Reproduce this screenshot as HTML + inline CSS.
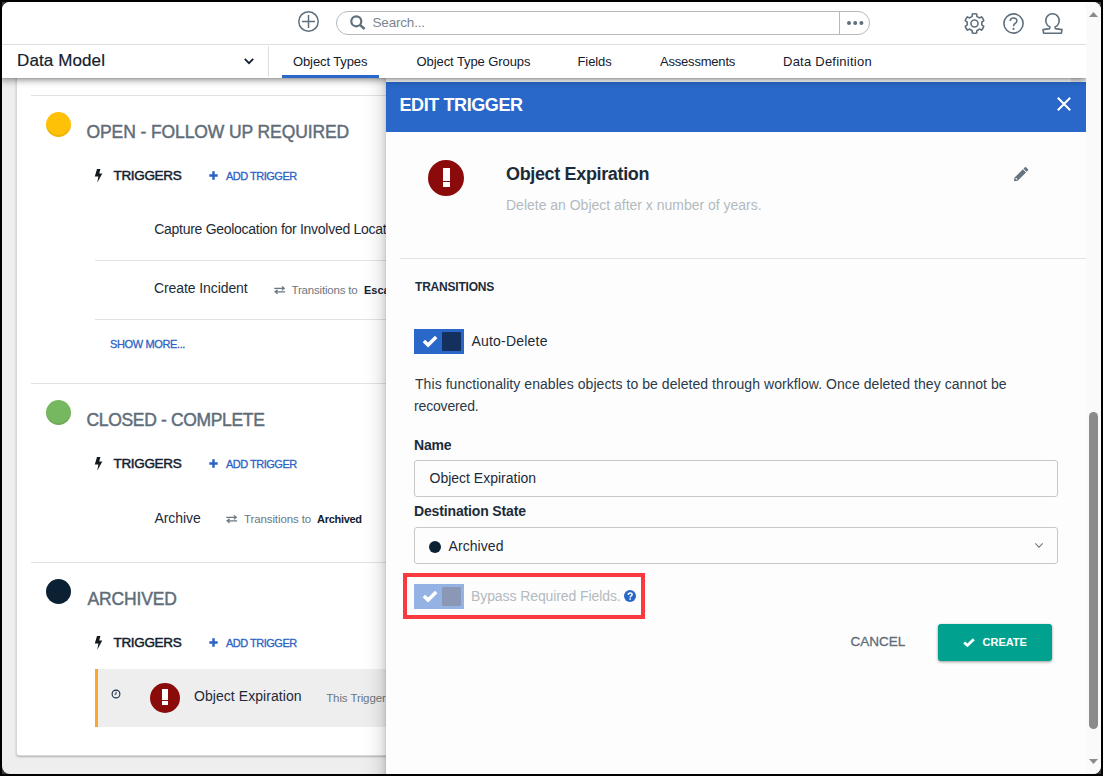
<!DOCTYPE html>
<html>
<head>
<meta charset="utf-8">
<title>Edit Trigger</title>
<style>
*{box-sizing:border-box;margin:0;padding:0}
html,body{width:1103px;height:776px;overflow:hidden;background:#000;font-family:"Liberation Sans",sans-serif;}
#win{position:absolute;left:2px;top:2px;width:1099px;height:772px;background:#eeeeee;border-radius:8px;overflow:hidden;}
#pg{position:absolute;left:-2px;top:-2px;width:1103px;height:776px;}
.abs{position:absolute;white-space:nowrap;}
svg{position:absolute;overflow:visible}
#topbar{left:0;top:0;width:1086px;height:45px;background:#fff;border-bottom:1px solid #dcdfe2;}
#navbar{left:0;top:45px;width:1086px;height:33px;background:#fff;box-shadow:0 0 1px rgba(0,0,0,.35),0 2px 7px rgba(0,0,0,.45);}
#vscroll{left:1086px;top:0;width:15px;height:776px;background:#fafafa;}
#card{left:16px;top:60px;width:1056px;height:696px;background:#fff;border:1px solid #d6d8db;border-radius:3px;box-shadow:0 1px 2px rgba(0,0,0,.25);}
.hr{height:1px;background:#e1e2e3;}
.state{font-size:17.5px;color:#5f6d79;-webkit-text-stroke:.45px #5f6d79;}
.trg{font-size:13.5px;color:#14202e;-webkit-text-stroke:.5px #14202e;}
.add{font-size:11px;color:#2c63c4;-webkit-text-stroke:.3px #2c63c4;}
.item{font-size:14px;color:#1d2a38;}
.trans{font-size:11.5px;color:#6b7781;}
.tb{font-size:11px;color:#14202e;font-weight:bold;}
.dot{border-radius:50%;}
#panel{left:386px;top:82px;width:700px;height:694px;background:#fdfdfd;}
#pshadow{left:362px;top:78px;width:24px;height:698px;background:linear-gradient(to right,rgba(0,0,0,0) 0,rgba(0,0,0,.012) 30%,rgba(0,0,0,.04) 58%,rgba(0,0,0,.085) 80%,rgba(0,0,0,.15) 94%,rgba(0,0,0,.21) 100%);}
#phead{left:386px;top:82px;width:700px;height:50px;background:#2967c8;}
.tab{font-size:13px;color:#14202e;}
.lbl{font-size:14px;font-weight:bold;color:#1c2b3a;}
.inp{left:414px;width:644px;height:36.5px;border:1px solid #c5c9cc;border-radius:3px;background:#fdfdfd;}
</style>
</head>
<body>
<div style="position:absolute;left:2px;top:2px;width:8px;height:8px;background:#3a3a3a"></div>
<div style="position:absolute;left:1093px;top:2px;width:8px;height:8px;background:#3a3a3a"></div>
<div style="position:absolute;left:2px;top:766px;width:8px;height:8px;background:#3a3a3a"></div>
<div style="position:absolute;left:1093px;top:766px;width:8px;height:8px;background:#3a3a3a"></div>
<div id="win"><div id="pg">

<!-- background card (left list) -->
<div class="abs" id="card"></div>
<!-- inner scrollbar stub under header -->
<div class="abs" style="left:1071px;top:76px;width:15px;height:8px;background:#e9e9e9"></div>

<!-- LEFT CONTENT -->
<div class="abs hr" style="left:31px;top:95px;width:1040px"></div>
<div class="abs dot" style="left:46px;top:112px;width:25.2px;height:25.2px;background:#ffc107;box-shadow:inset 0 -2px 0 rgba(0,0,0,.07)"></div>
<div class="abs state" id="s1" style="left:86.5px;top:122.2px;letter-spacing:-0.1px">OPEN - FOLLOW UP REQUIRED</div>

<svg style="left:94px;top:168.5px" width="9" height="14" viewBox="0 0 9 14"><path d="M3.0 0 L6.4 0 L5.2 4.6 L8.3 4.6 L3.2 13.8 L4.4 7.4 L0.8 7.4 Z" fill="#14181f"/></svg>
<div class="abs trg" id="t1" style="left:113.5px;top:168.0px;letter-spacing:-0.33px">TRIGGERS</div>
<svg style="left:208.5px;top:171px" width="9" height="9" viewBox="0 0 9 9"><path d="M4.5 0.3V8.7M0.3 4.5H8.7" stroke="#2c63c4" stroke-width="2.5" fill="none"/></svg>
<div class="abs add" id="a1" style="left:226.0px;top:170.0px;letter-spacing:-0.5px">ADD TRIGGER</div>
<div class="abs item" id="i1" style="left:154.2px;top:221.1px;letter-spacing:-0.28px"><span id="i1a">Capture Geolocation for Involved Loc</span>ation</div>
<div class="abs hr" style="left:95px;top:260px;width:976px"></div>
<div class="abs item" id="i2" style="left:154.0px;top:280.4px;letter-spacing:-0.09px">Create Incident</div>
<svg style="left:273.6px;top:285.7px" width="11.4" height="8.2" viewBox="0 0 12 9" preserveAspectRatio="none"><path d="M0.3 2.6H10.6M8.2 0.4L10.9 2.6L8.2 4.8M11.7 6.4H1.4M3.8 4.2L1.1 6.4L3.8 8.6" stroke="#6b7781" stroke-width="1.3" fill="none"/></svg>
<div class="abs trans" id="tr1" style="left:291.5px;top:284.0px;letter-spacing:-0.19px">Transitions to</div>
<div class="abs tb" id="tb1" style="left:364px;top:284px">Escalated</div>
<div class="abs hr" style="left:95px;top:319px;width:976px"></div>
<div class="abs add" id="sm" style="left:110.0px;top:338.3px;letter-spacing:-0.37px">SHOW MORE...</div>

<div class="abs hr" style="left:31px;top:383px;width:1040px"></div>
<div class="abs dot" style="left:46px;top:400px;width:25.2px;height:25.2px;background:#76b85f;box-shadow:inset 0 -2px 0 rgba(0,0,0,.07)"></div>
<div class="abs state" id="s2" style="left:86.5px;top:410.0px;letter-spacing:-0.34px">CLOSED - COMPLETE</div>
<svg style="left:94px;top:456.5px" width="9" height="14" viewBox="0 0 9 14"><path d="M3.0 0 L6.4 0 L5.2 4.6 L8.3 4.6 L3.2 13.8 L4.4 7.4 L0.8 7.4 Z" fill="#14181f"/></svg>
<div class="abs trg" id="t2" style="left:113.5px;top:456.3px;letter-spacing:-0.33px">TRIGGERS</div>
<svg style="left:208.5px;top:459px" width="9" height="9" viewBox="0 0 9 9"><path d="M4.5 0.3V8.7M0.3 4.5H8.7" stroke="#2c63c4" stroke-width="2.5" fill="none"/></svg>
<div class="abs add" id="a2" style="left:226.0px;top:458.0px;letter-spacing:-0.5px">ADD TRIGGER</div>
<div class="abs item" id="i3" style="left:154.5px;top:509.6px;letter-spacing:-0.08px">Archive</div>
<svg style="left:225.9px;top:515.2px" width="11.4" height="8.2" viewBox="0 0 12 9" preserveAspectRatio="none"><path d="M0.3 2.6H10.6M8.2 0.4L10.9 2.6L8.2 4.8M11.7 6.4H1.4M3.8 4.2L1.1 6.4L3.8 8.6" stroke="#6b7781" stroke-width="1.3" fill="none"/></svg>
<div class="abs trans" id="tr2" style="left:244.0px;top:513.4px;letter-spacing:-0.11px">Transitions to</div>
<div class="abs tb" id="tb2" style="left:317.0px;top:513.4px;letter-spacing:-0.29px">Archived</div>

<div class="abs hr" style="left:31px;top:562px;width:1040px"></div>
<div class="abs dot" style="left:46px;top:578.8px;width:25.2px;height:25.2px;background:#0c2033"></div>
<div class="abs state" id="s3" style="left:87.5px;top:589.3px;letter-spacing:-0.15px">ARCHIVED</div>
<svg style="left:94px;top:635.5px" width="9" height="14" viewBox="0 0 9 14"><path d="M3.0 0 L6.4 0 L5.2 4.6 L8.3 4.6 L3.2 13.8 L4.4 7.4 L0.8 7.4 Z" fill="#14181f"/></svg>
<div class="abs trg" id="t3" style="left:113.5px;top:635.3px;letter-spacing:-0.33px">TRIGGERS</div>
<svg style="left:208.5px;top:638px" width="9" height="9" viewBox="0 0 9 9"><path d="M4.5 0.3V8.7M0.3 4.5H8.7" stroke="#2c63c4" stroke-width="2.5" fill="none"/></svg>
<div class="abs add" id="a3" style="left:226.0px;top:637.0px;letter-spacing:-0.5px">ADD TRIGGER</div>
<div class="abs" style="left:95px;top:669px;width:980px;height:58px;background:#eeeeee;border-left:3px solid #f9a82a"></div>
<svg style="left:111.4px;top:689.2px" width="10" height="10" viewBox="0 0 10 10"><circle cx="5" cy="5" r="3.9" stroke="#1b2b45" stroke-width="1.1" fill="none"/><path d="M5.1 2.7V5.2H3.5" stroke="#1b2b45" stroke-width="0.9" fill="none"/></svg>
<div class="abs dot" style="left:150px;top:682.7px;width:30.3px;height:30.3px;background:#8b0a0a"></div>
<div class="abs" style="left:162.2px;top:689px;width:5.8px;height:11px;background:#fff"></div>
<div class="abs" style="left:162.2px;top:701.2px;width:5.8px;height:3.9px;background:#fff"></div>
<div class="abs item" id="i4" style="left:194.0px;top:688.2px;letter-spacing:0.06px">Object Expiration</div>
<div class="abs trans" id="tt" style="left:326.2px;top:692px;font-size:11.5px;letter-spacing:-0.1px">This Trigger</div>

<!-- PANEL -->
<div class="abs" id="pshadow"></div>
<div class="abs" id="panel"></div>
<div class="abs" id="phead"></div>
<div class="abs" id="et" style="left:399.5px;top:95.2px;font-size:18px;font-weight:bold;color:#fff;letter-spacing:-0.41px">EDIT TRIGGER</div>
<svg style="left:1057px;top:97px" width="14" height="14" viewBox="0 0 14 14"><path d="M0.8 0.8L13.2 13.2M13.2 0.8L0.8 13.2" stroke="#fff" stroke-width="2" fill="none"/></svg>

<div class="abs dot" style="left:428px;top:160px;width:36.2px;height:36.2px;background:#8b0a0a"></div>
<div class="abs" style="left:442.6px;top:167.6px;width:7px;height:13.2px;background:#fff"></div>
<div class="abs" style="left:442.6px;top:182.2px;width:7px;height:4.7px;background:#fff"></div>
<div class="abs" id="oe" style="left:506.0px;top:164.4px;font-size:18px;font-weight:bold;color:#1c2b3a;letter-spacing:-0.35px">Object Expiration</div>
<div class="abs" id="de" style="left:506.0px;top:197.2px;font-size:14px;color:#b3bac0;letter-spacing:-0.01px">Delete an Object after x number of years.</div>
<svg style="left:1013.8px;top:167.4px" width="14.3" height="14.3" viewBox="0 0 14 14"><path d="M0 14L0.5 10.4L8.7 2.2L11.8 5.3L3.6 13.5Z M9.3 1.6L10.6 0.3Q11.2 -0.2 11.8 0.3L13.7 2.2Q14.2 2.8 13.7 3.4L12.4 4.7Z" fill="#66747f"/><path d="M1.6 10.9L3.1 12.4" stroke="#fdfdfd" stroke-width="1" fill="none"/></svg>
<div class="abs hr" style="left:400px;top:258px;width:686px"></div>
<div class="abs" id="trn" style="left:415.0px;top:280.4px;font-size:12px;font-weight:bold;color:#1c2b3a;letter-spacing:-0.2px">TRANSITIONS</div>

<div class="abs" style="left:414px;top:329px;width:50px;height:25px;background:#2967c8"></div>
<div class="abs" style="left:442px;top:332px;width:19px;height:19px;background:#14305e;border-radius:1px"></div>
<svg style="left:422px;top:334.8px" width="16" height="12" viewBox="0 0 16 12"><path d="M1.9 6.0L6.1 10.1L14.2 2.0" stroke="#fff" stroke-width="3.5" fill="none"/></svg>
<div class="abs item" id="ad" style="left:471.5px;top:333.3px;letter-spacing:0.2px">Auto-Delete</div>
<div class="abs item" id="p1" style="left:415.0px;top:376.4px;color:#2b3948;letter-spacing:0.06px">This functionality enables objects to be deleted through workflow. Once deleted they cannot be</div>
<div class="abs item" id="p2" style="left:414.0px;top:397.6px;color:#2b3948;letter-spacing:-0.16px">recovered.</div>
<div class="abs lbl" id="ln" style="left:414.0px;top:436.5px;letter-spacing:-0.17px">Name</div>
<div class="abs inp" style="top:460px"></div>
<div class="abs item" id="in1" style="left:429.5px;top:470.4px;letter-spacing:-0.0px">Object Expiration</div>
<div class="abs lbl" id="ld" style="left:414.0px;top:503.4px;letter-spacing:-0.15px">Destination State</div>
<div class="abs inp" style="top:527px"></div>
<div class="abs dot" style="left:428.5px;top:540.8px;width:12.6px;height:12.6px;background:#0c2033"></div>
<div class="abs item" id="in2" style="left:448.5px;top:537.7px;letter-spacing:0.07px">Archived</div>
<svg style="left:1035.4px;top:543px" width="8" height="5" viewBox="0 0 8 5"><path d="M0.3 0.4L4 4.1L7.7 0.4" stroke="#6d7a86" stroke-width="1.1" fill="none"/></svg>

<div class="abs" style="left:403px;top:573px;width:242px;height:46px;border:4px solid #fb3a3f"></div>
<div class="abs" style="left:414px;top:584.2px;width:50px;height:24.6px;background:#94b3e4"></div>
<div class="abs" style="left:442px;top:587.2px;width:19px;height:18.8px;background:#8a98b5;border-radius:1px"></div>
<svg style="left:422px;top:589.8px" width="16" height="12" viewBox="0 0 16 12"><path d="M1.9 6.0L6.1 10.1L14.2 2.0" stroke="#fff" stroke-width="3.5" fill="none"/></svg>
<div class="abs item" id="br" style="left:471.0px;top:588.2px;color:#b3bac0;letter-spacing:-0.09px">Bypass Required Fields.</div>
<div class="abs dot" style="left:623.8px;top:590px;width:12.4px;height:12.4px;background:#2967c8"></div>
<svg style="left:623.8px;top:590px" width="12.4" height="12.4" viewBox="0 0 12.4 12.4"><path d="M4.3 4.9Q4.3 3.0 6.2 3.0Q8.1 3.0 8.1 4.6Q8.1 5.6 7.0 6.1Q6.2 6.5 6.2 7.5" stroke="#fff" stroke-width="1.5" fill="none"/><rect x="5.45" y="8.3" width="1.5" height="1.5" fill="#fff"/></svg>

<div class="abs" id="cn" style="left:850.5px;top:633.9px;font-size:13.5px;color:#5f6d79;-webkit-text-stroke:.3px #5f6d79;letter-spacing:0.0px">CANCEL</div>
<div class="abs" style="left:938px;top:624px;width:114px;height:36.6px;background:#00a28f;border-radius:3px;box-shadow:0 1px 3px rgba(0,0,0,.4)"></div>
<svg style="left:963px;top:637.6px" width="12" height="9" viewBox="0 0 12 9"><path d="M1.2 4.4L4.4 7.4L10.8 1.2" stroke="#fff" stroke-width="2.8" fill="none"/></svg>
<div class="abs" id="cr" style="left:982.5px;top:635.9px;font-size:11px;font-weight:bold;color:#fff;letter-spacing:0.0px">CREATE</div>

<!-- HEADER -->
<div class="abs" id="navbar"></div>
<div class="abs" id="topbar"></div>
<svg style="left:298.3px;top:11px" width="21" height="21" viewBox="0 0 21 21"><circle cx="10.5" cy="10.5" r="9.7" stroke="#5f6f7c" stroke-width="1.5" fill="none"/><path d="M10.5 4V17M4 10.5H17" stroke="#5f6f7c" stroke-width="1.5" fill="none"/></svg>
<div class="abs" style="left:336px;top:11px;width:534px;height:23.5px;border:1px solid #b5b9bd;border-radius:12px;background:#fff"></div>
<div class="abs" style="left:839px;top:12px;width:1px;height:22px;background:#b5b9bd"></div>
<svg style="left:350px;top:15.3px" width="16" height="15" viewBox="0 0 16 15"><circle cx="6.3" cy="6.3" r="5" stroke="#5f6f7c" stroke-width="2.2" fill="none"/><path d="M9.9 9.9L14.6 14" stroke="#5f6f7c" stroke-width="2.4" fill="none"/></svg>
<div class="abs" id="se" style="left:372.5px;top:15.1px;font-size:13.5px;color:#7b868f;letter-spacing:-0.19px">Search...</div>
<svg style="left:847px;top:21.2px" width="17" height="4" viewBox="0 0 17 4"><circle cx="2" cy="2" r="2" fill="#5f6f7c"/><circle cx="8.2" cy="2" r="2" fill="#5f6f7c"/><circle cx="14.4" cy="2" r="2" fill="#5f6f7c"/></svg>
<!-- gear -->
<svg style="left:964px;top:13px" width="21" height="21" viewBox="-10.5 -10.5 21 21"><g stroke="#5f6f7c" stroke-width="1.6" fill="none"><circle r="3.5"/><path id="gearp" d="M2.41 -7.00L2.18 -9.45A9.70 9.70 0 0 0 -2.18 -9.45L-2.41 -7.00A7.40 7.40 0 0 0 -4.85 -5.58L-7.09 -6.62A9.70 9.70 0 0 0 -9.28 -2.84L-7.26 -1.41A7.40 7.40 0 0 0 -7.26 1.41L-9.28 2.84A9.70 9.70 0 0 0 -7.09 6.62L-4.85 5.58A7.40 7.40 0 0 0 -2.41 7.00L-2.18 9.45A9.70 9.70 0 0 0 2.18 9.45L2.41 7.00A7.40 7.40 0 0 0 4.85 5.58L7.09 6.62A9.70 9.70 0 0 0 9.28 2.84L7.26 1.41A7.40 7.40 0 0 0 7.26 -1.41L9.28 -2.84A9.70 9.70 0 0 0 7.09 -6.62L4.85 -5.58A7.40 7.40 0 0 0 2.41 -7.00 Z" stroke-linejoin="round"/></g></svg>
<!-- help -->
<svg style="left:1003px;top:13px" width="21" height="21" viewBox="0 0 21 21"><circle cx="10.5" cy="10.5" r="9.6" stroke="#5f6f7c" stroke-width="1.6" fill="none"/><path d="M7.2 8.0Q7.3 5.0 10.6 5.0Q13.9 5.0 13.9 7.8Q13.9 9.5 12.0 10.5Q10.5 11.4 10.5 13.3" stroke="#5f6f7c" stroke-width="1.5" fill="none"/><circle cx="10.5" cy="15.9" r="1.05" fill="#5f6f7c"/></svg>
<!-- user -->
<svg style="left:1042px;top:13px" width="21" height="21" viewBox="0 0 21 21"><path d="M8.0 13.9A6.8 6.8 0 1 1 13.0 13.9L13.4 15.6L20.0 16.6L19.4 20.2H1.6L1.0 16.6L7.6 15.6Z" stroke="#5f6f7c" stroke-width="1.6" fill="none" stroke-linejoin="round"/></svg>

<div class="abs" id="dm" style="-webkit-text-stroke:.2px #14202e;left:17.0px;top:50.9px;font-size:17px;color:#14202e;letter-spacing:0.11px">Data Model</div>
<svg style="left:243.5px;top:58px" width="10" height="7" viewBox="0 0 10 7"><path d="M0.8 0.8L5 5.2L9.2 0.8" stroke="#14202e" stroke-width="1.8" fill="none"/></svg>
<div class="abs" style="left:268px;top:46px;width:1px;height:31px;background:#dcdfe2"></div>
<div class="abs tab" id="tb_1" style="left:293.0px;top:54.0px;letter-spacing:-0.11px">Object Types</div>
<div class="abs tab" id="tb_2" style="left:416.5px;top:54.0px;letter-spacing:-0.08px">Object Type Groups</div>
<div class="abs tab" id="tb_3" style="left:577.5px;top:54.0px;letter-spacing:-0.1px">Fields</div>
<div class="abs tab" id="tb_4" style="left:660.0px;top:54.0px;letter-spacing:-0.2px">Assessments</div>
<div class="abs tab" id="tb_5" style="left:783.0px;top:54.0px;letter-spacing:0.24px">Data Definition</div>
<div class="abs" style="left:282px;top:74.6px;width:97px;height:3.4px;background:#2967c8"></div>

<!-- window scrollbar -->
<div class="abs" id="vscroll"></div>
<svg style="left:1089px;top:12px" width="9" height="5" viewBox="0 0 9 5"><path d="M0 5L4.5 0L9 5Z" fill="#8b8b8b"/></svg>
<svg style="left:1089px;top:759px" width="9" height="5" viewBox="0 0 9 5"><path d="M0 0L4.5 5L9 0Z" fill="#8b8b8b"/></svg>
<div class="abs" style="left:1089px;top:412px;width:9px;height:317px;border-radius:4.5px;background:#8b8b8b"></div>

</div></div>
</body>
</html>
